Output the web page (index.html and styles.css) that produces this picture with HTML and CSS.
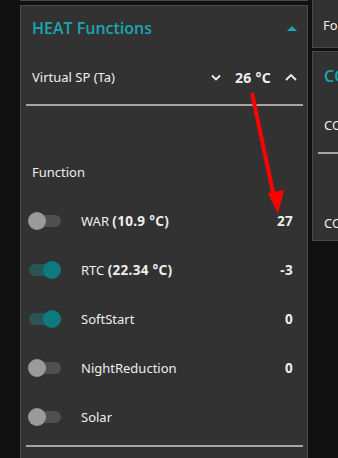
FILE: index.html
```html
<!DOCTYPE html>
<html lang="en">
    <head>
        <meta name="viewport" content="width=device-width, initial-scale=1.0">
        <title>HEAT Functions</title>
        <link rel="stylesheet" href="styles.css">
    </head>
    <body>
        <div class="page">
            <div class="col">
                <div class="prev"></div>
                <div class="panel">
                    <div class="head">
                        <span class="title">HEAT Functions</span>
                        <span class="caret"></span>
                    </div>
                    <div class="sp">
                        <span>Virtual SP (Ta)</span>
                        <div class="stepper">
                            <svg width="10" height="7" viewBox="0 0 10 7"><path d="M1 1.5 L5 5.5 L9 1.5" fill="none" stroke="#eee" stroke-width="1.8"/></svg>
                            <b>26 °C</b>
                            <svg width="12" height="7" viewBox="0 0 12 7"><path d="M1 6 L6 1 L11 6" fill="none" stroke="#eee" stroke-width="1.8"/></svg>
                        </div>
                    </div>
                    <div class="rule"></div>
                    <div class="gap"></div>
                    <div class="row"><span>Function</span></div>
                    <div class="row">
                        <span class="tog"></span>
                        <span class="lbl">WAR <b>(10.9 °C)</b></span>
                        <b class="val">27</b>
                    </div>
                    <div class="row">
                        <span class="tog on"></span>
                        <span class="lbl">RTC <b>(22.34 °C)</b></span>
                        <b class="val">-3</b>
                    </div>
                    <div class="row">
                        <span class="tog on"></span>
                        <span class="lbl">SoftStart</span>
                        <b class="val">0</b>
                    </div>
                    <div class="row">
                        <span class="tog"></span>
                        <span class="lbl">NightReduction</span>
                        <b class="val">0</b>
                    </div>
                    <div class="row">
                        <span class="tog"></span>
                        <span class="lbl">Solar</span>
                    </div>
                    <div class="rule low"></div>
                </div>
            </div>
            <div class="side">
                <div class="box top"><span>Fo</span></div>
                <div class="box">
                    <div class="stitle">CO</div>
                    <div class="sline">CO</div>
                    <div class="rule"></div>
                    <div class="sline far">CO</div>
                </div>
            </div>
        </div>
        <svg class="arrow" width="338" height="458" viewBox="0 0 338 458">
            <line x1="252" y1="93" x2="274" y2="197" stroke="#f00" stroke-width="4"/>
            <polygon points="268,193 284,190 278,214" fill="#f00"/>
        </svg>
    </body>
</html>
```

FILE: styles.css
```css
body {
    margin: 0;
    background-color: #111111;
    font-family: 'Noto Sans', 'Open Sans', sans-serif;
    font-size: 13px;
    color: #eeeeee;
    width: 338px;
    height: 458px;
    overflow: hidden;
}
b {
    font-size: 13.5px;
    letter-spacing: 0.3px;
}
.page {
    display: flex;
    padding-left: 20px;
}
.col {
    width: 288px;
    flex-shrink: 0;
}
.prev {
    height: 0;
    border-bottom: 1px solid #4a4a4a;
}
.panel {
    margin-top: 4px;
    background-color: #323232;
    border: 1px solid #4a4a4a;
    height: 460px;
}
.head {
    height: 44px;
    display: flex;
    align-items: center;
    justify-content: space-between;
    padding: 0 10px 0 11px;
}
.title {
    font-family: 'Open Sans', sans-serif;
    font-weight: 600;
    font-size: 16px;
    color: #1aa5b2;
}
.caret {
    width: 0;
    height: 0;
    border-left: 5px solid transparent;
    border-right: 5px solid transparent;
    border-bottom: 5px solid #1aa5b2;
}
.sp {
    height: 54px;
    display: flex;
    align-items: center;
    justify-content: space-between;
    padding: 0 10px 0 11px;
}
.stepper {
    display: flex;
    align-items: center;
    gap: 14px;
}
.stepper b {
    font-size: 14px;
}
.rule {
    height: 2px;
    margin: 0 4px 0 5px;
    background-color: #a8a5a0;
}
.rule.low {
    margin-top: 4px;
}
.gap {
    height: 41px;
}
.row {
    height: 49px;
    display: flex;
    align-items: center;
    padding: 0 14px 0 11px;
}
.tog {
    position: relative;
    width: 32px;
    height: 12px;
    margin-left: -3px;
    border-radius: 6px;
    background-color: #505050;
}
.tog::after {
    content: "";
    position: absolute;
    left: -1px;
    top: -3px;
    width: 18px;
    height: 18px;
    border-radius: 50%;
    background-color: #9a9a9a;
}
.tog.on {
    background-color: #2a5557;
}
.tog.on::after {
    left: 14px;
    background-color: #0e7a7f;
}
.lbl {
    margin-left: 20px;
}
.val {
    margin-left: auto;
}
.side {
    margin-left: 4px;
    width: 40px;
    flex-shrink: 0;
}
.box {
    background-color: #323232;
    border: 1px solid #4a4a4a;
    white-space: nowrap;
    overflow: hidden;
    padding-left: 10px;
}
.box.top {
    height: 48px;
    border-top: none;
    display: flex;
    align-items: flex-end;
    padding-bottom: 13px;
    box-sizing: border-box;
}
.box:not(.top) {
    margin-top: 3px;
    height: 188px;
    padding-left: 0;
}
.stitle {
    padding: 13px 0 0 11px;
    font-family: 'Open Sans', sans-serif;
    font-weight: 600;
    font-size: 16px;
    color: #1aa5b2;
}
.sline {
    padding: 29px 0 18px 11px;
}
.sline.far {
    padding-top: 60px;
}
.arrow {
    position: absolute;
    left: 0;
    top: 0;
}
```
